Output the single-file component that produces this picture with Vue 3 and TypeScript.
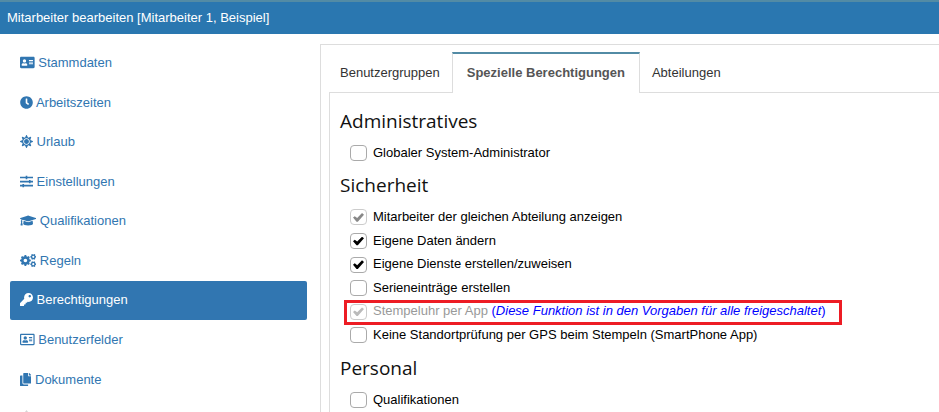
<script setup lang="ts">
interface NavItem {
  label: string
  width: number
  path: string
  active?: boolean
}

interface Permission {
  id: string
  label: string
  checked?: boolean
  disabled?: boolean
  note?: string
  marked?: boolean
}

interface Section {
  title: string
  items: Permission[]
}

// Outline of a cog wheel with a round hole in the middle.
function gear(cx: number, cy: number, radius: number, hole: number, teeth: number): string {
  const step = (Math.PI * 2) / teeth
  const root = radius * 0.8
  const points: string[] = []
  const add = (r: number, angle: number) =>
    points.push(`${(cx + r * Math.cos(angle)).toFixed(1)} ${(cy + r * Math.sin(angle)).toFixed(1)}`)
  for (let i = 0; i < teeth; i++) {
    const a = i * step
    add(root, a - step * 0.3)
    add(radius, a - step * 0.2)
    add(radius, a + step * 0.2)
    add(root, a + step * 0.3)
  }
  const ring = `M${cx - hole} ${cy}a${hole} ${hole} 0 1 0 ${hole * 2} 0a${hole} ${hole} 0 1 0 ${-hole * 2} 0z`
  return `M${points.join('L')}z${ring}`
}

const navItems: NavItem[] = [
  {
    label: 'Stammdaten',
    width: 576,
    path: 'M528 32H48C21.5 32 0 53.5 0 80v352c0 26.5 21.5 48 48 48h480c26.5 0 48-21.5 48-48V80c0-26.5-21.5-48-48-48zm-352 96c35.3 0 64 28.7 64 64s-28.7 64-64 64-64-28.7-64-64 28.7-64 64-64zm112 236.8c0 10.6-10 19.2-22.4 19.2H86.4C74 384 64 375.4 64 364.8v-19.2c0-31.8 30.1-57.6 67.2-57.6h5c12.3 5.1 25.7 8 39.8 8s27.6-2.9 39.8-8h5c37.1 0 67.2 25.8 67.2 57.6v19.2zM512 312c0 4.4-3.6 8-8 8H360c-4.4 0-8-3.6-8-8v-16c0-4.4 3.6-8 8-8h144c4.4 0 8 3.6 8 8v16zm0-64c0 4.4-3.6 8-8 8H360c-4.4 0-8-3.6-8-8v-16c0-4.4 3.6-8 8-8h144c4.4 0 8 3.6 8 8v16zm0-64c0 4.4-3.6 8-8 8H360c-4.4 0-8-3.6-8-8v-16c0-4.4 3.6-8 8-8h144c4.4 0 8 3.6 8 8v16z',
  },
  {
    label: 'Arbeitszeiten',
    width: 512,
    path: 'M256 8C119 8 8 119 8 256s111 248 248 248 248-111 248-248S393 8 256 8zm92.5 313l-20 25a16 16 0 0 1-22.5 2.5l-67-49.7a40 40 0 0 1-15-31.3V112a16 16 0 0 1 16-16h32a16 16 0 0 1 16 16v144l58 42.5a16 16 0 0 1 2.5 22.5z',
  },
  {
    label: 'Urlaub',
    width: 512,
    path: 'M256 160c-52.9 0-96 43.1-96 96s43.1 96 96 96 96-43.1 96-96-43.1-96-96-96zm246.4 80.5l-94.7-47.3 33.5-100.4c4.5-13.6-8.4-26.5-21.9-21.9l-100.4 33.5-47.4-94.8c-6.4-12.8-24.6-12.8-31 0l-47.3 94.7L92.7 70.8c-13.6-4.5-26.5 8.4-21.9 21.9l33.5 100.4-94.7 47.4c-12.8 6.4-12.8 24.6 0 31l94.7 47.3-33.5 100.5c-4.5 13.6 8.4 26.5 21.9 21.9l100.4-33.5 47.3 94.7c6.4 12.8 24.6 12.8 31 0l47.3-94.7 100.4 33.5c13.6 4.5 26.5-8.4 21.9-21.9l-33.5-100.4 94.7-47.3c13-6.5 13-24.7.2-31.1zm-155.9 106c-49.9 49.9-131.1 49.9-181 0-49.9-49.9-49.9-131.1 0-181 49.9-49.9 131.1-49.9 181 0 49.9 49.9 49.9 131.1 0 181z',
  },
  {
    label: 'Einstellungen',
    width: 512,
    path: 'M0 64h224V32h64v32h224v68H288v32h-64v-32H0zM0 224h352v-32h64v32h96v68h-96v32h-64v-32H0zM0 384h96v-32h64v32h352v68H160v32H96v-32H0z',
  },
  {
    label: 'Qualifikationen',
    width: 640,
    path: 'M622.34 153.2L343.4 67.5c-15.2-4.67-31.6-4.67-46.79 0L17.66 153.2c-23.54 7.23-23.54 38.36 0 45.59l48.63 14.94c-10.67 13.19-17.23 29.28-17.88 46.9C38.78 266.15 32 276.11 32 288c0 10.78 5.68 19.85 13.86 25.65L20.33 428.53C18.11 438.52 25.71 448 35.94 448h56.11c10.24 0 17.84-9.48 15.62-19.47L82.14 313.65C90.32 307.85 96 298.78 96 288c0-11.57-6.47-21.25-15.66-26.87.76-15.02 8.44-28.3 20.69-36.72L296.6 284.5c9.06 2.78 26.44 6.25 46.79 0l278.95-85.7c23.55-7.24 23.55-38.36 0-45.6zM352.79 315.09c-28.53 8.76-52.84 3.92-65.59 0l-145.02-44.55L128 384c0 35.35 85.96 64 192 64s192-28.65 192-64l-14.18-113.47-145.03 44.56z',
  },
  {
    label: 'Regeln',
    width: 640,
    path: gear(212, 256, 216, 72, 8) + gear(522, 112, 118, 42, 6) + gear(522, 400, 118, 42, 6),
  },
  {
    label: 'Berechtigungen',
    width: 512,
    active: true,
    path: 'M512 176c0 97.2-78.8 176-176 176-11.2 0-22.2-1.1-32.8-3.1l-24 27A24 24 0 0 1 261.2 384H224v40c0 13.3-10.7 24-24 24h-40v40c0 13.3-10.7 24-24 24H24c-13.3 0-24-10.7-24-24v-78.1c0-6.3 2.5-12.4 7-16.9l161.8-161.8C163.1 213.8 160 195.3 160 176 160 78.8 238.8 0 336 0c97.5 0 176 78.5 176 176zM336 128c0 26.5 21.5 48 48 48s48-21.5 48-48-21.5-48-48-48-48 21.5-48 48z',
  },
  {
    label: 'Benutzerfelder',
    width: 576,
    path: 'M528 32H48C21.5 32 0 53.5 0 80v352c0 26.5 21.5 48 48 48h480c26.5 0 48-21.5 48-48V80c0-26.5-21.5-48-48-48zm0 400H48V80h480v352zM208 256c35.3 0 64-28.7 64-64s-28.7-64-64-64-64 28.7-64 64 28.7 64 64 64zm-89.6 128h179.2c12.4 0 22.4-8.6 22.4-19.2v-19.2c0-31.8-30.1-57.6-67.2-57.6-10.8 0-18.7 8-44.8 8-26.9 0-33.4-8-44.8-8-37.1 0-67.2 25.8-67.2 57.6v19.2c0 10.6 10 19.2 22.4 19.2zM360 320h112c4.4 0 8-3.6 8-8v-16c0-4.4-3.6-8-8-8H360c-4.4 0-8 3.6-8 8v16c0 4.4 3.6 8 8 8zm0-64h112c4.4 0 8-3.6 8-8v-16c0-4.4-3.6-8-8-8H360c-4.4 0-8 3.6-8 8v16c0 4.4 3.6 8 8 8zm0-64h112c4.4 0 8-3.6 8-8v-16c0-4.4-3.6-8-8-8H360c-4.4 0-8 3.6-8 8v16c0 4.4 3.6 8 8 8z',
  },
  {
    label: 'Dokumente',
    width: 448,
    path: 'M320 448v40c0 13.3-10.7 24-24 24H24c-13.3 0-24-10.7-24-24V120c0-13.3 10.7-24 24-24h72v296c0 30.9 25.1 56 56 56h168zm0-344V0H152c-13.3 0-24 10.7-24 24v368c0 13.3 10.7 24 24 24h272c13.3 0 24-10.7 24-24V128H344c-13.2 0-24-10.8-24-24zm121-31L375 7a24 24 0 0 0-17-7h-6v96h96v-6a24 24 0 0 0-7-17z',
  },
]

const tabs = [
  { label: 'Benutzergruppen', active: false },
  { label: 'Spezielle Berechtigungen', active: true },
  { label: 'Abteilungen', active: false },
]

const sections: Section[] = [
  {
    title: 'Administratives',
    items: [{ id: 'admin', label: 'Globaler System-Administrator' }],
  },
  {
    title: 'Sicherheit',
    items: [
      { id: 'abteilung', label: 'Mitarbeiter der gleichen Abteilung anzeigen', checked: true, disabled: true },
      { id: 'daten', label: 'Eigene Daten ändern', checked: true },
      { id: 'dienste', label: 'Eigene Dienste erstellen/zuweisen', checked: true },
      { id: 'serien', label: 'Serieneinträge erstellen' },
      {
        id: 'stempeluhr',
        label: 'Stempeluhr per App',
        checked: true,
        disabled: true,
        note: 'Diese Funktion ist in den Vorgaben für alle freigeschaltet',
        marked: true,
      },
      { id: 'gps', label: 'Keine Standortprüfung per GPS beim Stempeln (SmartPhone App)' },
    ],
  },
  {
    title: 'Personal',
    items: [{ id: 'qualifikationen', label: 'Qualifikationen' }],
  },
]
</script>

<template>
  <div class="page">
    <header class="titlebar">Mitarbeiter bearbeiten [Mitarbeiter 1, Beispiel]</header>
    <div class="layout">
      <nav class="sidebar">
        <a v-for="item in navItems" :key="item.label" href="#" class="nav-link" :class="{ active: item.active }">
          <svg class="icon" :viewBox="`0 0 ${item.width} 512`" aria-hidden="true">
            <path :d="item.path" fill="currentColor" fill-rule="evenodd" />
          </svg>
          {{ item.label }}
        </a>
        <span class="nav-link muted" aria-hidden="true">
          <svg class="icon" viewBox="0 0 416 512">
            <path d="M208 0l48 64c90 20 112 90 112 180v140l48 48H0l48-48V244c0-90 22-160 112-180z" fill="currentColor" />
          </svg>
        </span>
      </nav>
      <main class="card">
        <div class="tabs" role="tablist">
          <button
            v-for="tab in tabs"
            :key="tab.label"
            type="button"
            role="tab"
            class="tab"
            :class="{ active: tab.active }"
            :aria-selected="tab.active"
          >
            {{ tab.label }}
          </button>
        </div>
        <div class="panel" role="tabpanel">
          <section v-for="section in sections" :key="section.title">
            <h2 class="heading">{{ section.title }}</h2>
            <div v-for="item in section.items" :key="item.id" class="row" :class="{ marked: item.marked }">
              <input :id="item.id" type="checkbox" class="check" :checked="item.checked" :disabled="item.disabled" />
              <label :for="item.id">
                <span class="label-text">{{ item.label }}</span>
                <span v-if="item.note" class="note"> (<em>{{ item.note }}</em>)</span>
              </label>
            </div>
          </section>
        </div>
      </main>
    </div>
  </div>
</template>

<style>
body {
  margin: 0;
  overflow: hidden;
  background: #fff;
}
</style>

<style scoped>
.page {
  height: 100vh;
  overflow: hidden;
  display: flex;
  flex-direction: column;
  color: #000;
  font-family: "Liberation Sans", Arial, sans-serif;
  font-size: 13px;
  line-height: 1.43;
}

.titlebar {
  flex: none;
  padding: 7px;
  border-top: 2px solid #528ba5;
  background: #2a77b0;
  color: #fff;
  line-height: 18px;
}

.layout {
  flex: 1;
  min-height: 0;
  display: grid;
  grid-template-columns: 297px minmax(0, 1fr);
  gap: 13px;
  padding: 10px 0 0 10px;
}

.sidebar {
  display: flex;
  flex-direction: column;
  gap: 1px;
  min-height: 0;
}

.nav-link {
  flex: none;
  padding: 10px;
  border-radius: 2px;
  color: #3176b1;
  text-decoration: none;
}

.nav-link.active {
  background: #3176b1;
  color: #fff;
}

.nav-link.muted {
  color: #d5d5d5;
}

.icon {
  height: 13px;
  vertical-align: -2px;
}

.muted .icon {
  height: 16px;
}

.card {
  display: flex;
  flex-direction: column;
  border: solid #ddd;
  border-width: 1px 0 0 1px;
  padding: 7px 0 0 8px;
  min-height: 0;
}

.tabs {
  flex: none;
  display: flex;
  gap: 1px;
  border-bottom: 1px solid #ddd;
}

.tab {
  margin: 0 0 -1px;
  padding: 10px;
  border: 1px solid transparent;
  border-top-width: 2px;
  border-bottom: 0;
  background: transparent;
  color: #333;
  font: inherit;
}

.tab.active {
  padding: 10px 14px;
  border-color: #528ba5 #ddd transparent;
  background: #fff;
  color: #555;
  font-weight: bold;
}

.panel {
  flex: 1;
  min-height: 0;
  overflow: hidden;
  padding: 10px 10px 0;
  border-left: 1px solid #ddd;
}

.heading {
  margin: 0;
  padding: 6px 0 11px;
  color: #111;
  font-family: "Open Sans", "Noto Sans", sans-serif;
  font-size: 19px;
  font-weight: 400;
  line-height: 24px;
}

.row {
  position: relative;
  display: flex;
  align-items: center;
  gap: 6px;
  width: fit-content;
  margin-left: 10px;
  padding-bottom: 5px;
}

.check {
  appearance: none;
  flex: none;
  box-sizing: border-box;
  width: 17px;
  height: 16px;
  margin: 0;
  border: 1px solid #aaa;
  border-radius: 4px;
  background: #fff;
  display: grid;
  place-items: center;
}

.check:checked::before {
  content: "";
  width: 11px;
  height: 9px;
  background: #000;
  clip-path: polygon(0 52%, 16% 36%, 38% 56%, 82% 2%, 100% 20%, 44% 98%, 32% 98%);
}

.check:disabled {
  border-color: #ccc;
}

.check:disabled::before {
  background: #888;
}

.marked .check:disabled::before {
  background: #bbb;
}

.marked .label-text {
  color: #999;
}

.note {
  color: #00f;
}

/* Highlight frame drawn over the row */
.marked::after {
  content: "";
  position: absolute;
  inset: -2px -16px 1px -6px;
  border: 3px solid #ed1c24;
  pointer-events: none;
}
</style>
